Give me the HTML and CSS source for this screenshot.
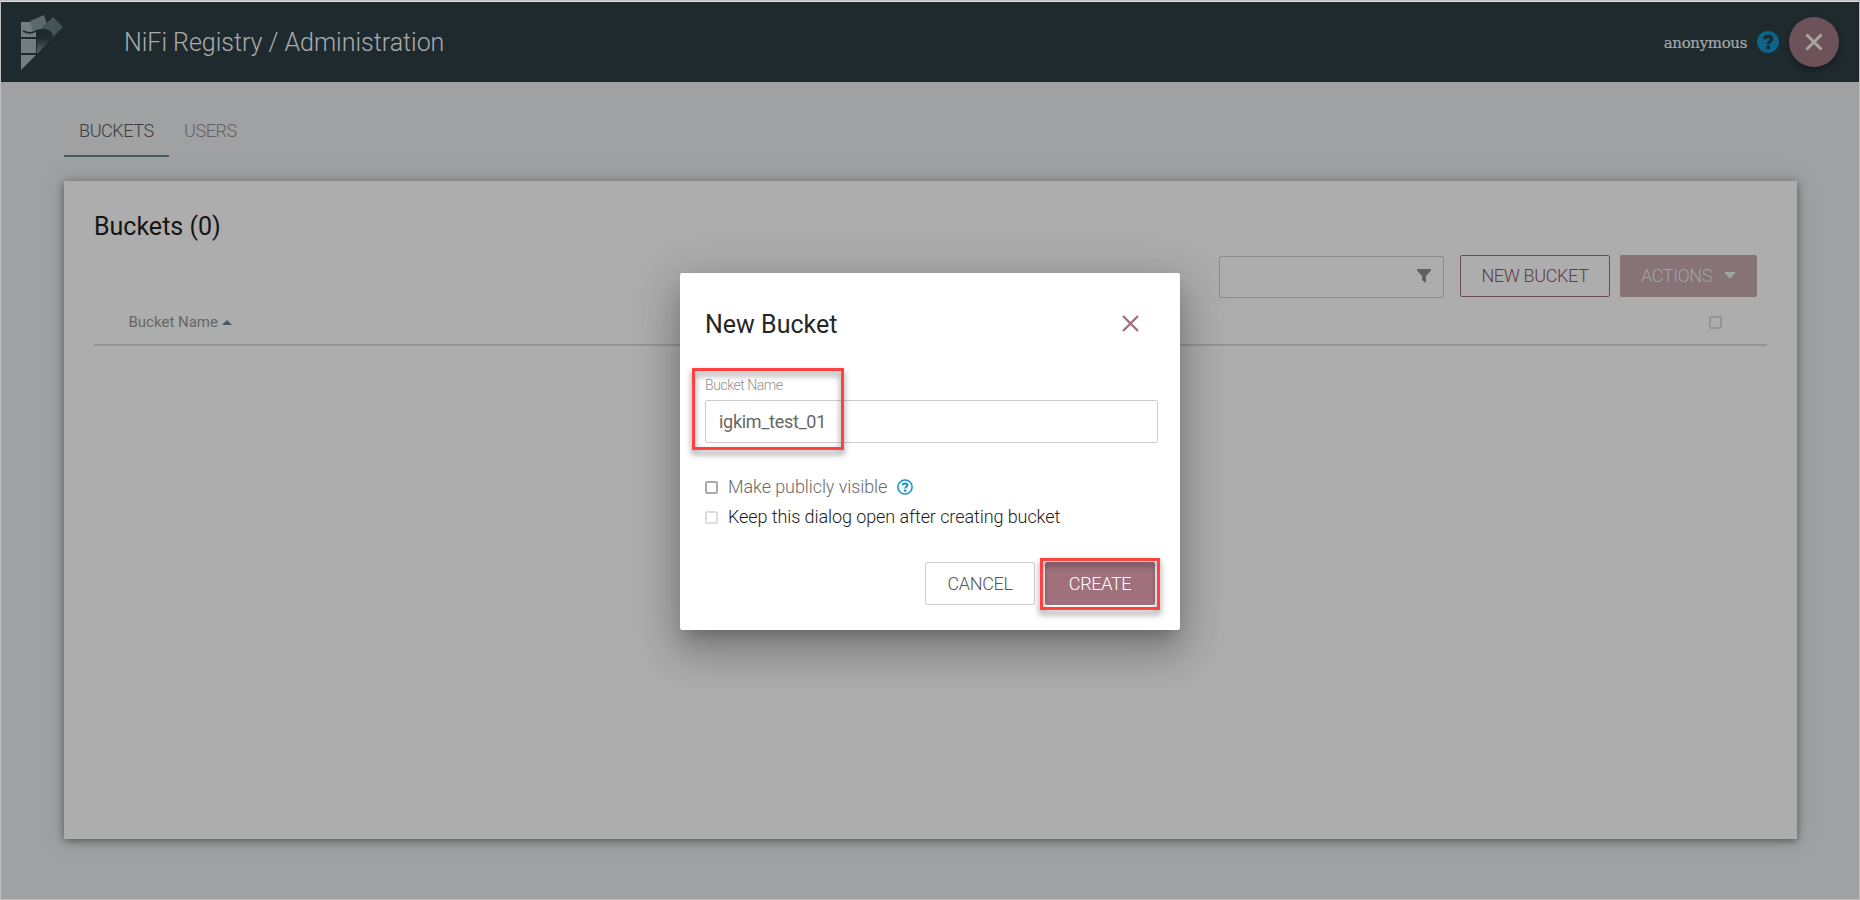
FILE: index.html
```html
<!DOCTYPE html>
<html lang="en">
<head>
<meta charset="utf-8">
<title>NiFi Registry</title>
<link rel="stylesheet" href="styles.css">
</head>
<body>
<div class="app">
  <header class="header">
    <svg class="logo" width="44" height="56" viewBox="0 0 44 56">
      <defs><linearGradient id="fold" x1="0" y1="0" x2="0" y2="1"><stop offset="0" stop-color="#1f2a2f"/><stop offset="1" stop-color="#566a70"/></linearGradient></defs>
      <path fill="#737e80" d="M0 7h10l5 9v6H0zM0 24h15v14H0zM0 40h15L0 55z"/>
      <path fill="#5b686d" d="M9 6 23 0l4 12-15 5z"/>
      <path fill="#435459" d="M32 2l10 10-10 10-11-10z"/>
      <path fill="#1f2a2f" d="M15 19c6-7 17-4 17 4l-1 2H15z"/>
      <path fill="url(#fold)" d="M16 23h15L16 39z"/>
      <path fill="none" stroke="#1f2a2f" stroke-width="1.6" d="M2 16c6 3 9 2 13 0s12-3 16 4"/>
    </svg>
    <h1 class="header-title">NiFi Registry / Administration</h1>
    <span class="user">anonymous</span>
    <svg class="header-help" width="22" height="22" viewBox="0 0 22 22"><circle cx="11" cy="11" r="11" fill="#0e6388"/><path d="M7.200 8.100C8 6 9.400 5.400 11 5.400c2.200 0 3.600 1.100 3.600 2.700 0 2.400-3.300 2.500-3.300 5.100" fill="none" stroke="#1f2a2f" stroke-width="3.200"/><rect x="9.500" y="14.600" width="3.500" height="3.500" fill="#1f2a2f"/></svg>
    <button class="header-close"><svg width="18" height="18" viewBox="0 0 18 18"><path d="M1.500 1.500l15 15m0-15l-15 15" stroke="#a9a5a5" stroke-width="3"/></svg></button>
  </header>
  <main class="main">
    <nav class="tabs"><a class="tab tab-active"><span>BUCKETS</span></a><a class="tab">USERS</a></nav>
    <section class="card">
      <h2 class="card-title">Buckets (0)</h2>
      <div class="toolbar">
        <div class="filter"><svg width="14" height="14" viewBox="0 0 14 14"><path fill="#5c6263" d="M0 0h14v1.500L9 7v7L5 11V7L0 1.500z"/></svg></div>
        <button class="btn btn-new"><span>NEW BUCKET</span></button>
        <button class="btn btn-actions"><span>ACTIONS</span><svg width="12" height="7" viewBox="0 0 12 7"><path fill="#a0a5a0" d="M0 0h12L6 7z"/></svg></button>
      </div>
      <div class="table-head"><span>Bucket Name</span><svg width="10" height="5" viewBox="0 0 10 5"><path fill="#435c64" d="M0 5h10L5 0z"/></svg><i class="check check-head"></i></div>
    </section>
  </main>
</div>
<div class="dialog">
  <div class="dialog-head"><h3 class="dialog-title">New Bucket</h3><svg width="17" height="17" viewBox="0 0 17 17"><path d="M1 1l15 15m0-15L1 16" stroke="#a0717d" stroke-width="2.400"/></svg></div>
  <label class="field-label"><span>Bucket Name</span></label>
  <div class="field"><span>igkim_test_01</span></div>
  <div class="option option-public"><i class="check"></i><span>Make publicly visible</span><svg width="16" height="16" viewBox="0 0 16 16"><circle cx="8" cy="8" r="7.100" fill="none" stroke="#1491c7" stroke-width="1.500"/><path d="M5.500 6.200C6 4.800 7 4.400 8 4.400c1.300 0 2.400.6 2.400 1.800 0 1.600-2.200 1.500-2.200 3.300" fill="none" stroke="#1491c7" stroke-width="2"/><rect x="7.100" y="10.500" width="2.200" height="2.200" fill="#1491c7"/></svg></div>
  <div class="option option-keep"><i class="check"></i><span>Keep this dialog open after creating bucket</span></div>
  <div class="dialog-actions"><button class="btn btn-cancel"><span>CANCEL</span></button><button class="btn btn-create"><span>CREATE</span></button></div>
  <div class="mark mark-name"></div>
  <div class="mark mark-create"></div>
</div>
</body>
</html>
```
FILE: styles.css
```css
* { box-sizing: border-box; }
body { margin: 0; font-family: Roboto, "Liberation Sans", sans-serif; font-weight: 300; }
h1, h2, h3 { margin: 0; font-weight: inherit; }
svg { display: block; flex: none; }
button { border: 0; padding: 0; font: inherit; }
span { white-space: nowrap; }
.app { width: 1860px; height: 900px; border: 1px solid #bdbdbd; background: #a0a1a3; overflow: hidden; }
.header { height: 81px; border-top: 1px solid #dfe3e3; background: #1f2a2f; display: flex; align-items: center; padding: 0 20px; }
.logo { margin-top: 1px; }
.header-title { margin-left: 59px; margin-top: 1px; font-size: 25px; letter-spacing: -.02px; color: #a9acae; flex: 1; }
.user { font-family: "Roboto Slab", "DejaVu Serif", serif; font-weight: 400; font-size: 15px; letter-spacing: -.35px; color: #a7aaab; -webkit-text-stroke: .2px #a7aaab; margin-top: 1px; }
.header-help { margin: 0 10px 0; }
.header-close { width: 50px; height: 50px; border-radius: 50%; background: #6e525a; margin-top: -1px; display: flex; align-items: center; justify-content: center; box-shadow: 0 3px 6px rgba(0,0,0,.35); }
.main { padding: 0 62px 0 63px; }
.tabs { display: flex; height: 75px; margin-bottom: 24px; }
.tab { padding: 36px 15px 0; font-size: 18px; line-height: 26px; letter-spacing: -.4px; color: #606162; }
.tab-active { width: 105px; color: #3c3d3e; border-bottom: 2px solid #455d64; }
.card { height: 658px; background: #adadad; padding: 30px 30px 0; box-shadow: 0 2px 8px rgba(0,0,0,.42), 0 0 20px rgba(100,110,95,.3); }
.card-title { font-size: 25px; line-height: 32px; font-weight: 400; color: #151515; }
.toolbar { display: flex; margin-top: 12px; justify-content: flex-end; padding-right: 10px; }
.filter { width: 225px; height: 42px; margin: 1px 16px 0 0; border: 1px solid #8c8c8c; border-radius: 2px; display: flex; align-items: center; justify-content: flex-end; padding: 0 12px 2px; }
.btn { height: 42px; border-radius: 2px; font-size: 18px; letter-spacing: -.35px; display: flex; align-items: center; justify-content: center; padding-bottom: 2px; }
.btn-new { width: 150px; border: 1px solid #6e4c56; background: none; color: #5f3b47; margin-right: 10px; }
.btn-actions { width: 137px; background: #877277; color: #a0a5a0; gap: 12px; letter-spacing: -.4px; }
.table-head { display: flex; align-items: center; height: 48px; border-bottom: 2px solid #949494; padding: 2px 45px 0 34.5px; font-size: 15px; font-weight: 400; color: #666; }
.table-head svg { margin-left: 4px; }
.check { width: 13px; height: 13px; border: 2px solid #aaa; border-radius: 2px; flex: none; }
.check-head { margin-left: auto; margin-top: 1px; border-color: #949494; }
.dialog { position: absolute; left: 680px; top: 273px; width: 500px; height: 357px; padding: 24px 22px 0 25px; border-radius: 2px; background: #fff; box-shadow: 0 11px 15px -7px rgba(0,0,0,.22), 0 24px 38px 3px rgba(0,0,0,.16), 0 9px 46px 8px rgba(0,0,0,.14); }
.dialog-head { display: flex; align-items: center; justify-content: space-between; height: 54px; padding-right: 19px; }
.dialog-title { font-size: 25px; font-weight: 400; color: #262626; }
.dialog-head svg { margin-bottom: 1px; }
.field-label { display: block; margin-top: 25px; height: 24px; line-height: 18px; font-size: 14px; letter-spacing: -.45px; color: #909090; }
.field { height: 43px; border: 1px solid #cccdd2; border-radius: 2px; padding-left: 13px; line-height: 42px; font-size: 18px; letter-spacing: -.3px; font-weight: 400; color: #666; }
.option { display: flex; align-items: center; height: 30px; font-size: 18px; letter-spacing: -.08px; }
.option span { margin-left: 10px; padding-bottom: 1px; }
.option svg { margin: 0 0 1px 10px; }
.option-public { margin-top: 29px; color: #6b6b6b; }
.option-keep { color: #1c1c1c; }
.option-keep .check { border-color: #ddd; }
.dialog-actions { display: flex; justify-content: flex-end; gap: 10px; padding-right: 3px; margin-top: 30px; }
.dialog-actions .btn { width: 110px; height: 43px; padding-bottom: 0; }
.btn-cancel { background: #fff; border: 1px solid #cccdd2; color: #555; }
.btn-create { background: #a0717d; color: #fff; }
.mark { position: absolute; border: 3px solid #ff4141; filter: drop-shadow(0 4px 3px rgba(0,0,0,.5)); }
.mark-name { left: 12px; top: 95px; width: 152px; height: 82px; }
.mark-create { left: 360px; top: 285px; width: 120px; height: 52px; }
```
